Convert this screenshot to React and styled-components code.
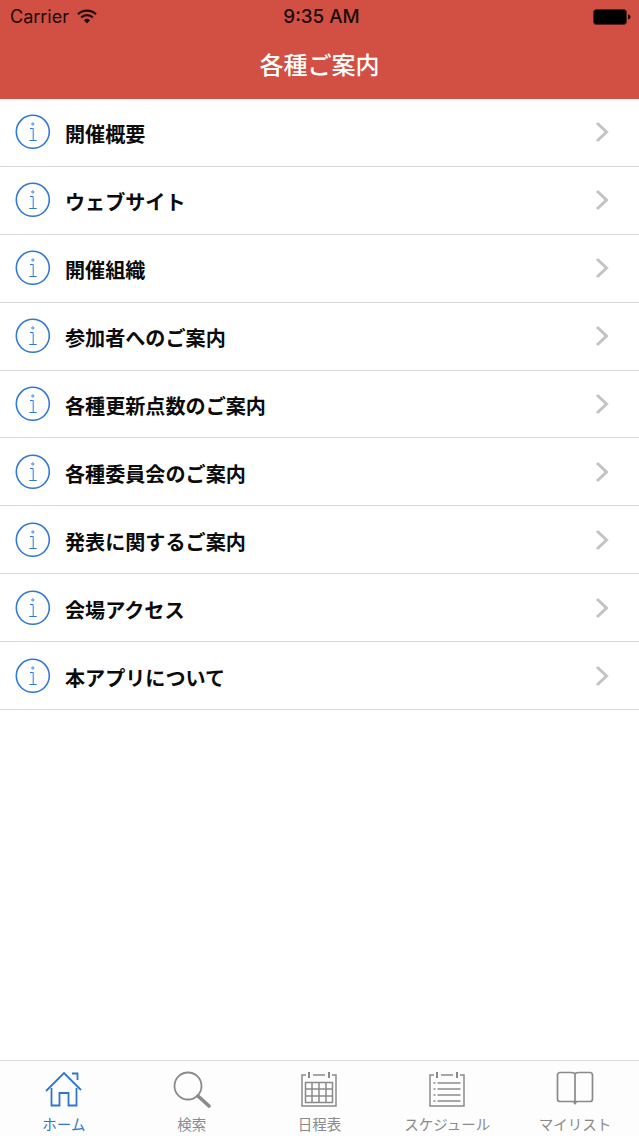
import styled, { createGlobalStyle } from 'styled-components';

const GlobalStyle = createGlobalStyle`
  html, body {
    margin: 0;
    padding: 0;
    background: #fff;
  }
  * {
    box-sizing: border-box;
  }
`;

const Screen = styled.div`
  width: 639px;
  height: 1136px;
  display: flex;
  flex-direction: column;
  overflow: hidden;
  background: #fff;
  font-family: "Noto Sans CJK JP", "Noto Sans", sans-serif;
`;

const Header = styled.header`
  height: 99px;
  flex: none;
  display: flex;
  flex-direction: column;
  background: #d14f43;
`;

const StatusBar = styled.div`
  height: 33px;
  padding: 0 8px 0 10px;
  display: flex;
  align-items: center;
  justify-content: space-between;
  color: #1a0a08;
`;

const StatusSide = styled.div`
  width: 118px;
  display: flex;
  align-items: center;
  justify-content: ${(p) => (p.$right ? 'flex-end' : 'flex-start')};
  gap: 8px;
`;

const Carrier = styled.span`
  font: 18px "Inter", "Liberation Sans", sans-serif;
`;

const Clock = styled.span`
  margin-left: 2px;
  font: 500 18.8px "Inter", "Liberation Sans", sans-serif;
`;

const NavTitle = styled.div`
  flex: 1;
  display: flex;
  align-items: center;
  justify-content: center;
  padding-bottom: 6px;
  color: #fff;
  font-size: 24px;
  font-weight: 500;
`;

const List = styled.ul`
  flex: 1;
  margin: 0;
  padding: 0;
  list-style: none;
`;

const Row = styled.li`
  height: 67.9px;
  padding: 0 30px 0 15px;
  display: flex;
  align-items: center;
  gap: 14px;
  border-bottom: 1px solid #dadadc;
`;

const RowLabel = styled.span`
  flex: 1;
  font-size: 20.1px;
  font-weight: 700;
  color: #0b0b0b;
  padding-top: 3px;
`;

const IconSlot = styled.span`
  display: flex;
  flex: none;
`;

const TabBar = styled.nav`
  height: 76px;
  flex: none;
  display: grid;
  grid-template-columns: repeat(5, 1fr);
  border-top: 1px solid #dcdcdc;
  background: #fdfdfd;
`;

const Tab = styled.div`
  display: flex;
  flex-direction: column;
  align-items: center;
  padding-top: 10px;
  color: ${(p) => (p.$active ? '#2f76d2' : '#8a8a8a')};
`;

const TabIcon = styled.span`
  height: 43px;
  display: flex;
  align-items: flex-start;
`;

const TabLabel = styled.span`
  font-size: 14.5px;
  line-height: 20px;
  white-space: nowrap;
`;

const items = [
  '開催概要',
  'ウェブサイト',
  '開催組織',
  '参加者へのご案内',
  '各種更新点数のご案内',
  '各種委員会のご案内',
  '発表に関するご案内',
  '会場アクセス',
  '本アプリについて',
];

function WifiIcon() {
  return (
    <svg width="20" height="15" viewBox="0 0 20 15">
      <path d="M1 5.2a13 13 0 0 1 18 0" fill="none" stroke="currentColor" strokeWidth="2.2" />
      <path d="M4.2 8.4a8.6 8.6 0 0 1 11.6 0" fill="none" stroke="currentColor" strokeWidth="2.2" />
      <path d="M7 11.2a4.4 4.4 0 0 1 6 0L10 14.4z" fill="currentColor" />
    </svg>
  );
}

function BatteryIcon() {
  return (
    <svg width="38" height="16" viewBox="0 0 38 16">
      <rect x="0.5" y="0.5" width="33" height="15" rx="3" fill="#000" stroke="#5a1e18" />
      <path d="M35 5.5c1.6.3 2.5 1.2 2.5 2.5s-.9 2.2-2.5 2.5z" fill="#1a0a08" />
    </svg>
  );
}

function InfoIcon() {
  return (
    <svg width="36" height="36" viewBox="0 0 36 36" fill="none" stroke="#2f7ad6">
      <circle cx="17.8" cy="17.8" r="16.5" strokeWidth="1.6" />
      <circle cx="17.8" cy="10" r="1.1" strokeWidth="0.9" />
      <path d="M15 14.5h3.2v12M14.3 26.5h7.4" strokeWidth="1" />
    </svg>
  );
}

function Chevron() {
  return (
    <svg width="14" height="22" viewBox="0 0 14 22" fill="none" stroke="#c3c3c7" strokeWidth="3">
      <path d="M2 2l9.5 9L2 20" />
    </svg>
  );
}

function HomeIcon() {
  return (
    <svg width="38" height="38" viewBox="0 0 38 38" fill="none" stroke="currentColor" strokeWidth="1.8">
      <path d="M1 20L19 2l17 17" />
      <path d="M27 2.5h5.5V9" />
      <path d="M6.5 17v17.5h8V22h9v12.5h8V17" />
    </svg>
  );
}

function SearchIcon() {
  return (
    <svg width="40" height="38" viewBox="0 0 40 38" fill="none" stroke="currentColor">
      <circle cx="16" cy="15" r="13.5" strokeWidth="1.8" />
      <path d="M26 25l11 10" strokeWidth="3.6" strokeLinecap="round" />
    </svg>
  );
}

function CalendarIcon() {
  return (
    <svg width="36" height="38" viewBox="0 0 36 38" fill="none" stroke="currentColor" strokeWidth="1.5">
      <path d="M5 4H1v31h34V4h-4M12 4h12" />
      <path d="M8 1v6M28 1v6" strokeWidth="2" />
      <path d="M4.5 11.5h27v20h-27zM4.5 18h27M4.5 25h27M11 11.5v20M18 11.5v20M25 11.5v20" />
    </svg>
  );
}

function ScheduleIcon() {
  return (
    <svg width="36" height="38" viewBox="0 0 36 38" fill="none" stroke="currentColor" strokeWidth="1.5">
      <path d="M5 4H1v31h34V4h-4M12 4h12" />
      <path d="M8 1v6M28 1v6" strokeWidth="2" />
      <path d="M4.5 12h2M8.5 12h23M4.5 18h2M8.5 18h23M4.5 24h2M8.5 24h23M4.5 30h2M8.5 30h23" strokeWidth="1.6" />
    </svg>
  );
}

function BookIcon() {
  return (
    <svg width="38" height="36" viewBox="0 0 38 36" fill="none" stroke="currentColor" strokeWidth="1.7">
      <path d="M19 2.5C18 2 17 1.5 15 1.5H4A2.5 2.5 0 0 0 1.5 4v24A2.5 2.5 0 0 0 4 30.5h30a2.5 2.5 0 0 0 2.5-2.5V4A2.5 2.5 0 0 0 34 1.5H23c-2 0-3 .5-4 1z" />
      <path d="M19 2.5V32" />
      <path d="M16.5 30.5h5L19 34z" fill="currentColor" stroke="none" />
    </svg>
  );
}

const tabs = [
  { label: 'ホーム', Icon: HomeIcon, active: true },
  { label: '検索', Icon: SearchIcon },
  { label: '日程表', Icon: CalendarIcon },
  { label: 'スケジュール', Icon: ScheduleIcon },
  { label: 'マイリスト', Icon: BookIcon },
];

export default function App() {
  return (
    <Screen>
      <GlobalStyle />
      <Header>
        <StatusBar>
          <StatusSide>
            <Carrier>Carrier</Carrier>
            <WifiIcon />
          </StatusSide>
          <Clock>9:35 AM</Clock>
          <StatusSide $right>
            <BatteryIcon />
          </StatusSide>
        </StatusBar>
        <NavTitle>各種ご案内</NavTitle>
      </Header>
      <List>
        {items.map((item) => (
          <Row key={item}>
            <IconSlot>
              <InfoIcon />
            </IconSlot>
            <RowLabel>{item}</RowLabel>
            <IconSlot>
              <Chevron />
            </IconSlot>
          </Row>
        ))}
      </List>
      <TabBar>
        {tabs.map(({ label, Icon, active }) => (
          <Tab key={label} $active={active}>
            <TabIcon>
              <Icon />
            </TabIcon>
            <TabLabel>{label}</TabLabel>
          </Tab>
        ))}
      </TabBar>
    </Screen>
  );
}
